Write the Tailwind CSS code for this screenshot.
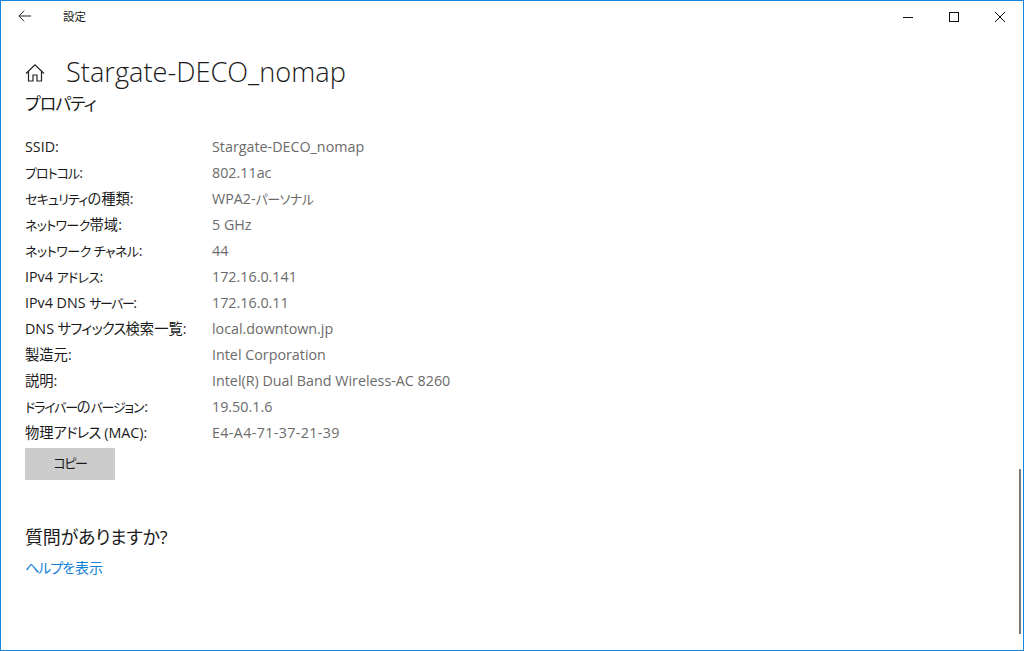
<!DOCTYPE html>
<html lang="ja">
<head>
  <meta charset="UTF-8">
  <title>設定</title>
  <script src="https://cdn.jsdelivr.net/npm/@tailwindcss/browser@4"></script>
</head>
<body class="bg-white overflow-hidden font-['Open_Sans','Noto_Sans_CJK_JP',sans-serif] [font-feature-settings:'palt']">
  <div class="relative w-[1024px] h-[651px] border border-[#1a85d8] text-[#1a1a1a] overflow-hidden">

    <!-- タイトルバー -->
    <div class="flex items-center h-[31px]">
      <div class="w-[62px] pl-[17px] flex items-center">
        <svg class="w-[13px] h-[12px] mb-[2px]" viewBox="0 0 13 12" fill="none" stroke="#222" stroke-width="1">
          <path d="M13 6H1M6.2 0.7L0.9 6L6.2 11.3"/>
        </svg>
      </div>
      <span class="text-[11.5px]">設定</span>
      <div class="ml-auto flex items-center">
        <div class="w-[46px] flex justify-center"><svg class="w-[10px] h-[10px]" viewBox="0 0 10 10" stroke="#111" fill="none"><path d="M0 5.5H10"/></svg></div>
        <div class="w-[46px] flex justify-center"><svg class="w-[10px] h-[10px]" viewBox="0 0 10 10" stroke="#111" fill="none"><rect x="0.5" y="0.5" width="9" height="9"/></svg></div>
        <div class="w-[46px] flex justify-center"><svg class="w-[10px] h-[10px]" viewBox="0 0 10 10" stroke="#111" fill="none"><path d="M0 0L10 10M10 0L0 10"/></svg></div>
      </div>
    </div>

    <!-- 本文 -->
    <div class="pl-[24px]">
      <div class="flex items-center h-[40px] mt-[20px]">
        <svg class="w-[20px] h-[20px] mt-[1px]" viewBox="0 0 20 20" fill="none" stroke="#222" stroke-width="1.2">
          <path d="M1 10.5L10 1.8L19 10.5M3.5 8.5V18H8V12H12V18H16.5V8.5"/>
        </svg>
        <h1 class="ml-[21px] text-[27.2px] font-light leading-[40px]">Stargate-DECO_nomap</h1>
      </div>
      <h2 class="text-[17px] leading-[24px] tracking-[-1px]">プロパティ</h2>

      <dl class="mt-[18px] text-[14.3px] leading-[26px]">
        <div class="flex"><dt class="w-[187px] shrink-0">SSID:</dt><dd class="text-[#6b6b6b]">Stargate-DECO_nomap</dd></div>
        <div class="flex"><dt class="w-[187px] shrink-0"><span class="text-[13px] tracking-[-1px]">プロトコル</span>:</dt><dd class="text-[#6b6b6b]">802.11ac</dd></div>
        <div class="flex"><dt class="w-[187px] shrink-0"><span class="text-[13px] tracking-[-0.8px]">セキュリティ</span>の種類:</dt><dd class="text-[#6b6b6b]">WPA2-<span class="text-[13px] tracking-[-0.5px]">パーソナル</span></dd></div>
        <div class="flex"><dt class="w-[187px] shrink-0"><span class="text-[13px] tracking-[-0.7px]">ネットワーク</span>帯域:</dt><dd class="text-[#6b6b6b]">5 GHz</dd></div>
        <div class="flex"><dt class="w-[187px] shrink-0"><span class="text-[13px] tracking-[-0.5px]">ネットワーク チャネル</span>:</dt><dd class="text-[#6b6b6b]">44</dd></div>
        <div class="flex"><dt class="w-[187px] shrink-0">IPv4 <span class="text-[13px] tracking-[-0.7px]">アドレス</span>:</dt><dd class="text-[#6b6b6b]">172.16.0.141</dd></div>
        <div class="flex"><dt class="w-[187px] shrink-0">IPv4 DNS <span class="text-[13px] tracking-[-1.5px]">サーバー</span>:</dt><dd class="text-[#6b6b6b]">172.16.0.11</dd></div>
        <div class="flex"><dt class="w-[187px] shrink-0">DNS <span class="tracking-[-0.8px]">サフィックス</span>検索一覧:</dt><dd class="text-[#6b6b6b]">local.downtown.jp</dd></div>
        <div class="flex"><dt class="w-[187px] shrink-0">製造元:</dt><dd class="text-[#6b6b6b]">Intel Corporation</dd></div>
        <div class="flex"><dt class="w-[187px] shrink-0">説明:</dt><dd class="text-[#6b6b6b]">Intel(R) Dual Band Wireless-AC 8260</dd></div>
        <div class="flex"><dt class="w-[187px] shrink-0"><span class="text-[13px] tracking-[-1.2px]">ドライバー</span>の<span class="text-[13px] tracking-[-1.2px] pr-[1px]">バージョン</span>:</dt><dd class="text-[#6b6b6b]">19.50.1.6</dd></div>
        <div class="flex"><dt class="w-[187px] shrink-0">物理<span class="tracking-[-0.8px]">アドレス</span> (MAC):</dt><dd class="text-[#6b6b6b] tracking-[0.35px]">E4-A4-71-37-21-39</dd></div>
      </dl>

      <button class="block w-[90px] h-[32px] mt-[2px] bg-[#cccccc] text-[13px] tracking-[-1.4px]">コピー</button>

      <h2 class="text-[18px] leading-[26px] mt-[44px] tracking-[-0.2px]">質問がありますか?</h2>
      <a class="block text-[14px] leading-[22px] mt-[7px] text-[#0f7fd6]"><span class="tracking-[-1px]">ヘルプ</span>を表示</a>
    </div>

    <!-- スクロールバー -->
    <div class="absolute left-[1018px] top-[468px] w-[2px] h-[165px] bg-[#7a7a7a]"></div>
  </div>
</body>
</html>
